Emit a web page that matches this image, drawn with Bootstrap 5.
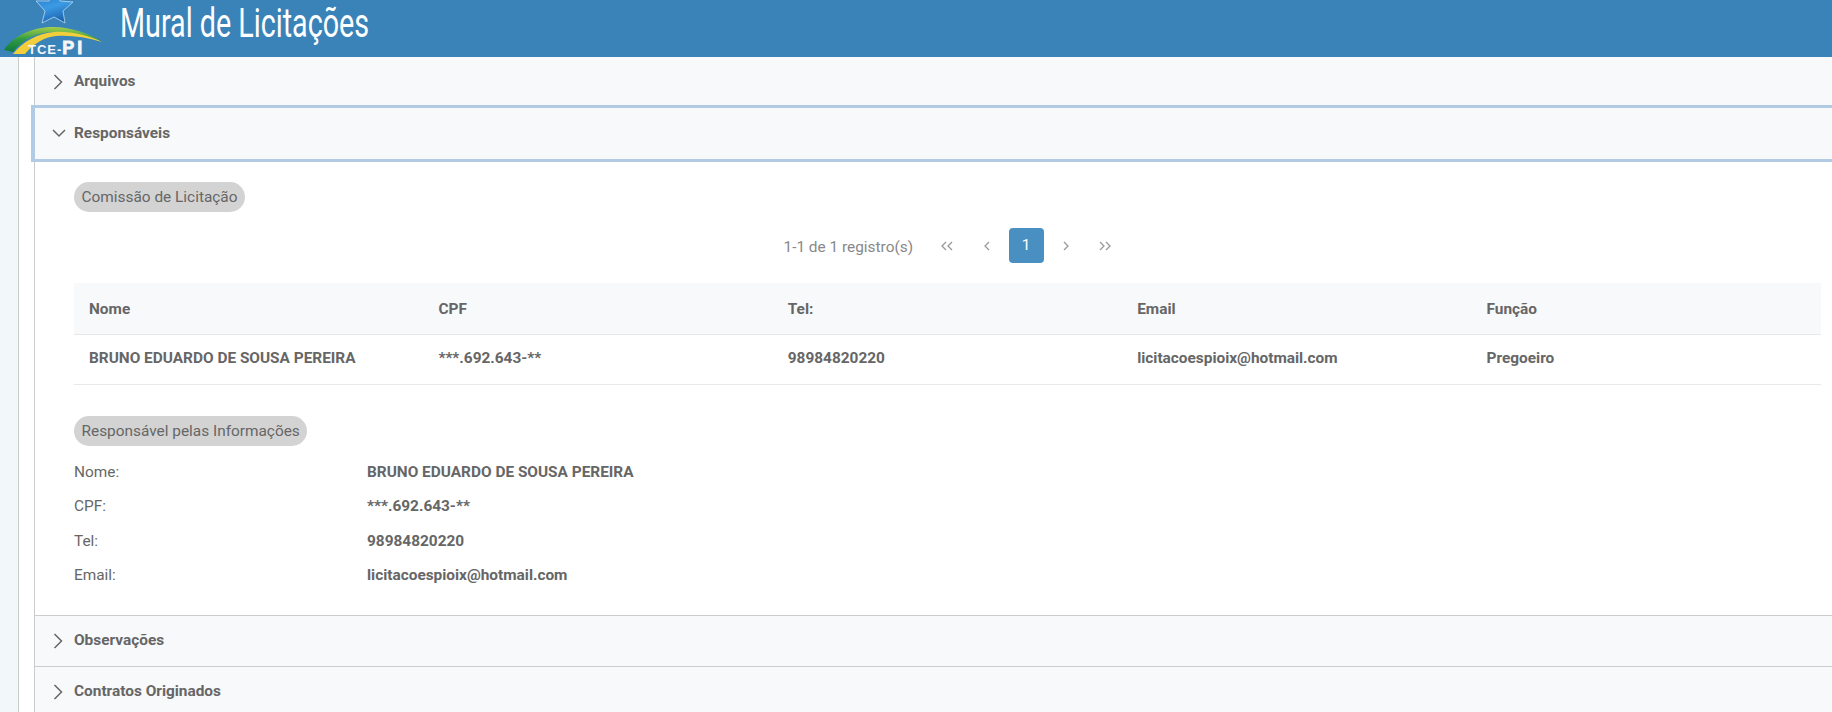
<!DOCTYPE html>
<html lang="pt-BR">
<head>
    <meta charset="UTF-8">
    <meta name="viewport" content="width=device-width, initial-scale=1.0">
    <title>Mural de Licitações</title>
    <link href="https://cdn.jsdelivr.net/npm/bootstrap@5.3.3/dist/css/bootstrap.min.css" rel="stylesheet">
    <style>
        html, body {
            height: 712px;
            overflow: hidden;
        }
        body {
            font-family: Roboto, "Liberation Sans", sans-serif;
            font-size: 15.4px;
            color: #666;
            background-color: #fff;
        }
        .top-bar {
            height: 57px;
            background-color: #3a83b9;
        }
        .logo-box {
            width: 120px;
            height: 57px;
        }
        .logo-text {
            font-family: "Liberation Sans", sans-serif;
            font-weight: 700;
            fill: #f4f7fa;
        }
        .page-title {
            font-family: Roboto, sans-serif;
            font-size: 41px;
            font-weight: 400;
            line-height: 47px;
            color: #fff;
            margin: 0;
            white-space: nowrap;
            transform: scaleX(0.7);
            transform-origin: left center;
        }
        .main-wrap {
            height: 655px;
        }
        .side-strip {
            width: 19px;
            background-color: #f2f7fa;
            border-right: 1px solid #ccc;
        }
        .side-gap {
            width: 16px;
            border-right: 1px solid #ccc;
        }
        .panel-area {
            min-width: 0;
        }
        .panel-head {
            height: 48px;
            padding-top: 1px;
            background-color: #f8f9fa;
            font-weight: 700;
            color: #666;
        }
        .panel-arrow {
            width: 39px;
            padding-left: 18px;
        }
        .panel-open {
            height: 57px;
            padding-top: 0;
            margin-left: -4px;
            border: 3px solid #b0cbe3;
            border-left-width: 4px;
            border-right: 0;
        }
        .panel-open .panel-arrow {
            padding-left: 17px;
        }
        .panel-line {
            height: 51px;
            padding-top: 0;
            border-top: 1px solid #ccc;
        }
        .panel-body-area {
            height: 453px;
            padding: 20px 11px 0 39px;
        }
        .pill-wrap {
            height: 30px;
        }
        .pill-wrap-second {
            margin: 31px 0 10px;
        }
        .title-pill {
            height: 30px;
            padding: 0 7.5px;
            line-height: 30px;
            border-radius: 15px;
            background-color: #d3d3d3;
            color: #666;
        }
        .pager-row {
            height: 71px;
            padding-left: 11px;
            color: #888;
        }
        .pager-info {
            margin-right: 12px;
        }
        .pager-btn {
            width: 35px;
            height: 35px;
            margin-left: 4.500px;
            margin-bottom: 4px;
            color: #888;
        }
        .pager-on {
            background-color: #4a8fc1;
            color: #fff;
            border-radius: 4px;
        }
        .data-table {
            width: 100%;
            table-layout: fixed;
            margin: 0;
            --bs-table-color: #666;
            --bs-table-border-color: #e8e8e8;
        }
        .data-table th,
        .data-table td {
            padding: 0 15px;
            vertical-align: middle;
            font-weight: 700;
            color: #666;
        }
        .data-table th {
            height: 51px;
            padding-top: 2px;
            background-color: #f8f9fa;
        }
        .data-table td {
            height: 50px;
        }
        .info-row {
            height: 34.3px;
        }
        .info-label {
            width: 293px;
        }
    </style>
</head>
<body>
    <!-- Header -->
    <header class="top-bar d-flex align-items-start">
        <div class="logo-box">
            <svg width="120" height="57" viewBox="0 0 120 57">
                <defs>
                    <linearGradient id="starFill" x1="0.2" y1="0" x2="0.5" y2="1">
                        <stop offset="0" stop-color="#1f6fbe"/>
                        <stop offset="0.55" stop-color="#3c9ae4"/>
                        <stop offset="1" stop-color="#1b62ae"/>
                    </linearGradient>
                    <linearGradient id="greenFill" x1="0" y1="0" x2="0" y2="1">
                        <stop offset="0" stop-color="#a3cf4a"/>
                        <stop offset="0.5" stop-color="#2f9a45"/>
                        <stop offset="1" stop-color="#0f7a3c"/>
                    </linearGradient>
                </defs>
                <polygon points="55,-12 60,1 73,2 63,11 65,23 54,17 42,23 45,11 36,1 49,1" fill="url(#starFill)" stroke="#b5daf5" stroke-width="0.800"/>
                <path d="M4 50 C14 34 36 27 53 27 C72 27 90 34 103 42 C86 35 70 32 54 32 C38 32 24 38 13 52 Z" fill="url(#greenFill)"/>
                <path d="M13 54 C22 42 38 33 54 32 C72 31 90 36 102 42 C86 37 70 35 56 36 C44 37 33 44 25 54 Z" fill="#f2cf3a"/>
                <text class="logo-text" x="28" y="54" font-size="13" letter-spacing="1">TCE-<tspan font-size="18" letter-spacing="3" stroke="#f4f7fa" stroke-width="0.800">PI</tspan></text>
            </svg>
        </div>
        <h1 class="page-title">Mural de Licitações</h1>
    </header>

    <div class="main-wrap d-flex">
        <div class="side-strip flex-shrink-0"></div>
        <div class="side-gap flex-shrink-0"></div>
        <div class="panel-area flex-grow-1">
            <div class="panel-head d-flex align-items-center">
                <span class="panel-arrow d-flex">
                    <svg width="10" height="16" viewBox="0 0 10 16"><path d="M1.5 1 8.500 8l-7 7" fill="none" stroke="#666" stroke-width="1.500"/></svg>
                </span>
                Arquivos
            </div>
            <div class="panel-head panel-open d-flex align-items-center">
                <span class="panel-arrow d-flex">
                    <svg width="14" height="10" viewBox="0 0 14 10"><path d="M1 1l6 6 6-6" fill="none" stroke="#666" stroke-width="1.500"/></svg>
                </span>
                Responsáveis
            </div>

            <div class="panel-body-area">
                <div class="pill-wrap d-flex">
                    <span class="title-pill">Comissão de Licitação</span>
                </div>

                <div class="pager-row d-flex align-items-center justify-content-center">
                    <span class="pager-info">1-1 de 1 registro(s)</span>
                    <span class="pager-btn d-flex align-items-center justify-content-center">
                        <svg width="14" height="10" viewBox="0 0 14 10"><path d="M6 1 2 5l4 4M12 1 8 5l4 4" fill="none" stroke="#999" stroke-width="1.300"/></svg>
                    </span>
                    <span class="pager-btn d-flex align-items-center justify-content-center">
                        <svg width="8" height="10" viewBox="0 0 8 10"><path d="M6 1 2 5l4 4" fill="none" stroke="#999" stroke-width="1.300"/></svg>
                    </span>
                    <span class="pager-btn pager-on d-flex align-items-center justify-content-center">1</span>
                    <span class="pager-btn d-flex align-items-center justify-content-center">
                        <svg width="8" height="10" viewBox="0 0 8 10"><path d="M2 1l4 4-4 4" fill="none" stroke="#999" stroke-width="1.300"/></svg>
                    </span>
                    <span class="pager-btn d-flex align-items-center justify-content-center">
                        <svg width="14" height="10" viewBox="0 0 14 10"><path d="M2 1l4 4-4 4M8 1l4 4-4 4" fill="none" stroke="#999" stroke-width="1.300"/></svg>
                    </span>
                </div>

                <table class="table data-table">
                    <thead>
                        <tr>
                            <th>Nome</th>
                            <th>CPF</th>
                            <th>Tel:</th>
                            <th>Email</th>
                            <th>Função</th>
                        </tr>
                    </thead>
                    <tbody>
                        <tr>
                            <td>BRUNO EDUARDO DE SOUSA PEREIRA</td>
                            <td>***.692.643-**</td>
                            <td>98984820220</td>
                            <td>licitacoespioix@hotmail.com</td>
                            <td>Pregoeiro</td>
                        </tr>
                    </tbody>
                </table>

                <div class="pill-wrap pill-wrap-second d-flex">
                    <span class="title-pill">Responsável pelas Informações</span>
                </div>
                <div class="info-row d-flex align-items-center">
                    <span class="info-label">Nome:</span>
                    <strong>BRUNO EDUARDO DE SOUSA PEREIRA</strong>
                </div>
                <div class="info-row d-flex align-items-center">
                    <span class="info-label">CPF:</span>
                    <strong>***.692.643-**</strong>
                </div>
                <div class="info-row d-flex align-items-center">
                    <span class="info-label">Tel:</span>
                    <strong>98984820220</strong>
                </div>
                <div class="info-row d-flex align-items-center">
                    <span class="info-label">Email:</span>
                    <strong>licitacoespioix@hotmail.com</strong>
                </div>
            </div>

            <div class="panel-head panel-line d-flex align-items-center">
                <span class="panel-arrow d-flex">
                    <svg width="10" height="16" viewBox="0 0 10 16"><path d="M1.5 1 8.500 8l-7 7" fill="none" stroke="#666" stroke-width="1.500"/></svg>
                </span>
                Observações
            </div>
            <div class="panel-head panel-line d-flex align-items-center">
                <span class="panel-arrow d-flex">
                    <svg width="10" height="16" viewBox="0 0 10 16"><path d="M1.5 1 8.500 8l-7 7" fill="none" stroke="#666" stroke-width="1.500"/></svg>
                </span>
                Contratos Originados
            </div>
        </div>
    </div>

    <script src="https://cdn.jsdelivr.net/npm/bootstrap@5.3.3/dist/js/bootstrap.bundle.min.js"></script>
</body>
</html>
